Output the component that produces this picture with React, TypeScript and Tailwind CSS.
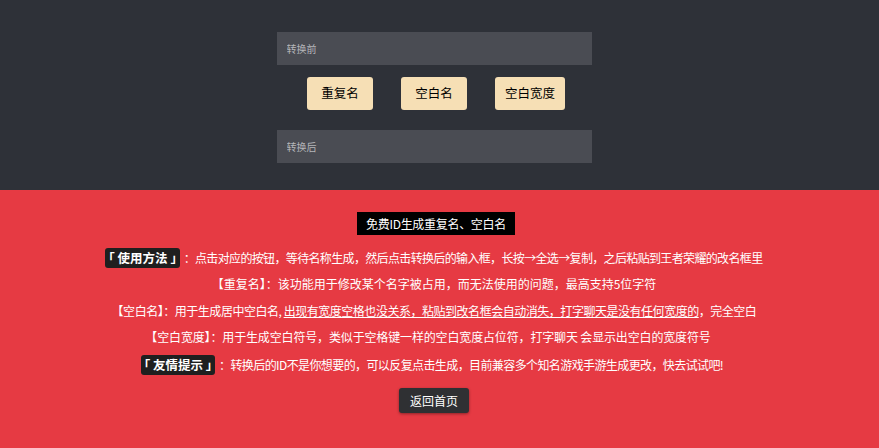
export default function App() {
  const font = { fontFamily: '"Noto Sans CJK SC", "Noto Sans", sans-serif' };
  return (
    <div className="w-full min-h-[448px] bg-[#e63a43]" style={font}>
      {/* 上半部分：输入与按钮 */}
      <section className="bg-[#2e3138] pt-[32px] pb-[27px] pr-[11px] flex flex-col items-center">
        <input
          className="w-[315px] h-[33px] bg-[#4a4c53] px-[10px] text-[10px] text-white placeholder:text-[#b5b6ba] outline-none"
          placeholder="转换前"
        />
        <div className="flex gap-[28px] mt-[12px] ml-[4px]">
          <button className="w-[66px] h-[33px] rounded-[3px] bg-[#f6dfb5] text-[12.5px] text-black">重复名</button>
          <button className="w-[66px] h-[33px] rounded-[3px] bg-[#f6dfb5] text-[12.5px] text-black">空白名</button>
          <button className="w-[70px] h-[33px] rounded-[3px] bg-[#f6dfb5] text-[12.5px] text-black">空白宽度</button>
        </div>
        <input
          className="mt-[20px] w-[315px] h-[33px] bg-[#4a4c53] px-[10px] text-[10px] text-white placeholder:text-[#b5b6ba] outline-none"
          placeholder="转换后"
        />
      </section>

      {/* 下半部分：说明 */}
      <section className="pt-[22px] pb-[30px] pr-[11px] flex flex-col items-center text-[12px] text-white">
        <div className="h-[23px] px-[9px] bg-black flex items-center text-[12px] tracking-[-0.3px] ml-[4px]">免费ID生成重复名、空白名</div>
        <div className="mt-[10px] h-[26px] flex items-center">
          <span className="bg-[#1f1f1f] rounded-[3px] px-[3px] h-[20px] flex items-center font-bold text-[12.5px]">｢ 使用方法 ｣</span>
          <span className="ml-[4px] tracking-[-0.65px]">：点击对应的按钮，等待名称生成，然后点击转换后的输入框，长按→全选→复制，之后粘贴到王者荣耀的改名框里</span>
        </div>
        <p className="h-[26px] leading-[26px]">【重复名】：该功能用于修改某个名字被占用，而无法使用的问题，最高支持5位字符</p>
        <p className="h-[27px] leading-[27px] tracking-[-0.47px]">
          【空白名】：用于生成居中空白名, <span className="underline">出现有宽度空格也没关系，粘贴到改名框会自动消失，打字聊天是没有任何宽度的</span>，完全空白
        </p>
        <p className="h-[26px] leading-[26px] tracking-[-0.15px] -ml-[12px]">【空白宽度】：用于生成空白符号，类似于空格键一样的空白宽度占位符，打字聊天 会显示出空白的宽度符号</p>
        <div className="mt-[2px] h-[26px] flex items-center -ml-[4px]">
          <span className="bg-[#1f1f1f] rounded-[3px] px-[3px] h-[20px] flex items-center font-bold text-[12.5px]">｢ 友情提示 ｣</span>
          <span className="ml-[4px] tracking-[-0.6px]">：转换后的ID不是你想要的，可以反复点击生成，目前兼容多个知名游戏手游生成更改，快去试试吧!</span>
        </div>
        <button className="mt-[10px] h-[25px] px-[11px] rounded-[3px] bg-[#2f3033] text-white text-[12px] shadow-[0_1px_3px_rgba(0,0,0,0.4)]">返回首页</button>
      </section>
    </div>
  );
}
